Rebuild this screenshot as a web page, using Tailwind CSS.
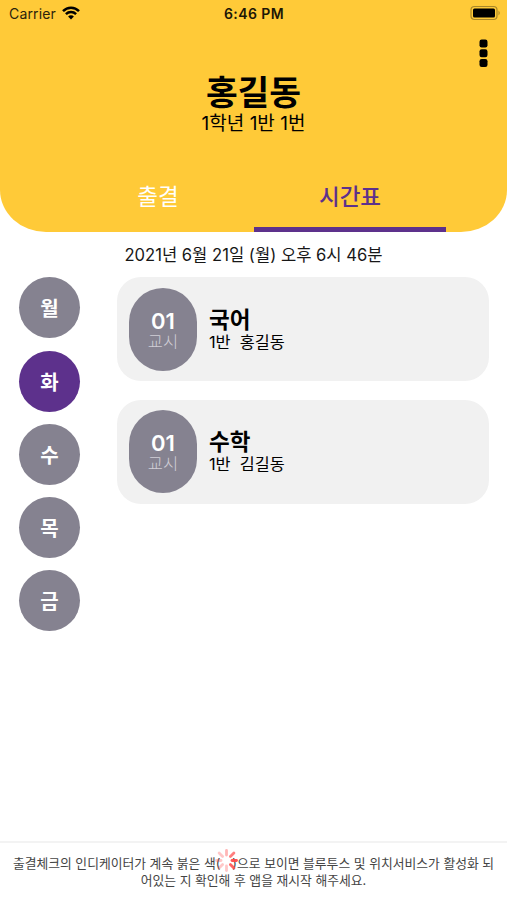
<!DOCTYPE html>
<html lang="ko">
<head>
<meta charset="utf-8">
<title>시간표</title>
<script src="https://cdn.jsdelivr.net/npm/@tailwindcss/browser@4"></script>
</head>
<body class="bg-white">
<div class="w-[507px] h-[900px] flex flex-col overflow-hidden bg-white text-black whitespace-nowrap font-[Inter,'Noto_Sans_CJK_KR',sans-serif]">
  <header class="h-[232px] shrink-0 flex flex-col bg-[#ffca38] rounded-b-[46px_42px]">
    <div class="h-[27px] grid grid-cols-3 items-center pl-[7px] pr-[6px] text-[14px] leading-[27px] text-[#2b230c]">
      <div class="flex items-center gap-[6px] pl-[2px]">
        <span class="tracking-[0.150px]">Carrier</span>
        <svg class="w-[18px] h-[14px] relative -top-px" viewBox="0 0 18 14" fill="none" stroke="#000" stroke-width="2.5"><path d="M1 5.200C5.500.6 12.500.6 17 5.200"/><path d="M3.900 8.200C6.800 5.400 11.200 5.400 14.100 8.200"/><path d="M6.100 10.400C7.700 8.900 10.300 8.900 11.900 10.400L9 13.400Z" fill="#000" stroke="none"/></svg>
      </div>
      <span class="text-center font-semibold tracking-[0.400px] text-[#1c1706]">6:46 PM</span>
      <svg class="w-[31px] h-[16px] justify-self-end relative -top-px" viewBox="0 0 31 16"><rect x="1" y="1.500" width="26" height="13" rx="3.500" fill="none" stroke="#a98728" stroke-width="1.200"/><rect x="3" y="3.500" width="22" height="9" rx="1.500"/><path d="M28.500 5.500Q31 8 28.500 10.500Z" fill="#a98728"/></svg>
    </div>
    <div class="h-[42px] flex justify-end pr-[19px] pt-[12px]">
      <svg class="w-[9px] h-[29px]" viewBox="0 0 9 29"><rect x=".5" y=".5" width="8" height="8" rx="2.200"/><rect x=".5" y="10.200" width="8" height="8" rx="2.200"/><rect x=".5" y="20" width="8" height="8" rx="2.200"/></svg>
    </div>
    <h1 class="h-[44px] text-center text-[34.500px] leading-[48px] font-bold">홍길동</h1>
    <p class="h-[20px] text-center text-[19px] leading-[22px]">1학년 1반 1번</p>
    <nav class="mt-[27px] ml-[62px] w-[384px] h-[72px] grid grid-cols-2 text-center text-[22.500px] leading-[73px]">
      <span class="text-white">출결</span>
      <span class="text-[#5d318c] font-medium border-b-5 border-[#5d318c] h-[72px]">시간표</span>
    </nav>
  </header>
  <p class="h-[45px] shrink-0 text-center text-[16.600px] leading-[47px] text-[#171717]">2021년 6월 21일 (월) 오후 6시 46분</p>
  <main class="flex-1 flex items-start pl-[19px]">
    <div class="pt-[0.300px] w-[61px] flex flex-col gap-[12.300px] text-center text-white font-bold text-[20px] leading-[64px]">
      <span class="h-[61px] rounded-full bg-[#858290]">월</span>
      <span class="h-[61px] rounded-full bg-[#5d318c]">화</span>
      <span class="h-[61px] rounded-full bg-[#858290]">수</span>
      <span class="h-[61px] rounded-full bg-[#858290]">목</span>
      <span class="h-[61px] rounded-full bg-[#858290]">금</span>
    </div>
    <div class="ml-[37px] w-[372px] flex flex-col gap-[18.500px]">
      <section class="h-[104px] rounded-[24px] bg-[#f1f1f1] flex items-center px-[12px] gap-[12px]">
        <div class="w-[68px] h-[83px] pt-[2px] rounded-[34px] bg-[#858290] flex flex-col items-center justify-center text-white">
          <b class="text-[22px] leading-[24px] font-semibold">01</b>
          <span class="text-[16.500px] leading-[18px] font-light text-[#d0ced6]">교시</span>
        </div>
        <div class="pt-[2px]">
          <h2 class="text-[22.500px] leading-[24px] font-bold">국어</h2>
          <p class="text-[16.300px] leading-[21px] whitespace-pre">1반  홍길동</p>
        </div>
      </section>
      <section class="h-[104px] rounded-[24px] bg-[#f1f1f1] flex items-center px-[12px] gap-[12px]">
        <div class="w-[68px] h-[83px] pt-[1px] rounded-[34px] bg-[#858290] flex flex-col items-center justify-center text-white">
          <b class="text-[22px] leading-[24px] font-semibold">01</b>
          <span class="text-[16.500px] leading-[18px] font-light text-[#d0ced6]">교시</span>
        </div>
        <div class="pt-[1px]">
          <h2 class="text-[22.500px] leading-[24px] font-bold">수학</h2>
          <p class="text-[16.300px] leading-[21px] whitespace-pre">1반  김길동</p>
        </div>
      </section>
    </div>
  </main>
  <footer class="relative h-[59px] shrink-0 border-t-2 border-[#f3f3f3] pt-[12px] text-center text-[12.800px] leading-[17px] text-[#444]">
    <p>출결체크의 인디케이터가 계속 붉은 색(<span class="inline-block w-[12px]"></span>)으로 보이면 블루투스 및 위치서비스가 활성화 되</p>
    <p>어있는 지 확인해 후 앱을 재시작 해주세요.</p>
    <svg class="absolute left-[214px] top-[5px] w-[25px] h-[25px]" viewBox="-12.500 -12.500 25 25" stroke="#ff4a4a" stroke-width="2.800" stroke-linecap="round"><path d="M0-5.500V-10" opacity=".4"/><path d="M3.900-3.900L7.400-7.400" opacity=".7"/><path d="M5.500 0H10" opacity=".95"/><path d="M3.900 3.900L7.400 7.400" opacity=".85"/><path d="M0 5.500V10" opacity=".3"/><path d="M-3.900 3.900L-7.400 7.400" opacity=".3"/><path d="M-5.500 0H-10" opacity=".3"/><path d="M-3.900-3.900L-7.400-7.400" opacity=".3"/></svg>
  </footer>
</div>
</body>
</html>
